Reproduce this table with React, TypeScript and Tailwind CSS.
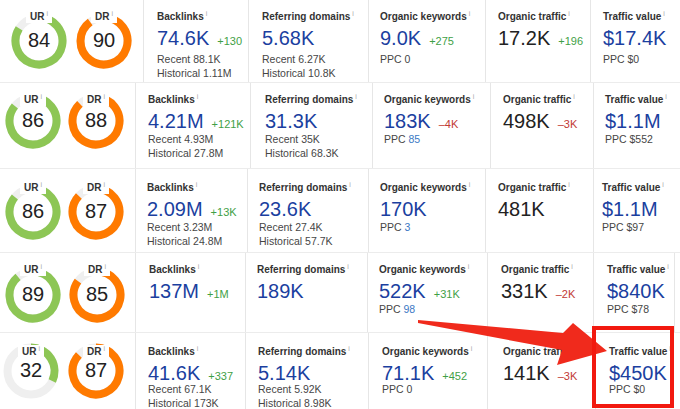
import React from "react";

type Col = {
  w: string;
  pl: string;
  label: string;
  value: string;
  vc: "blue" | "black";
  delta?: string;
  dc?: "green" | "red";
  lines?: React.ReactNode[];
};

type Row = {
  h: string;
  pt: string;
  gaugeBox: string;
  gaugeGap: string;
  gaugeMt: string;
  labelTop: string;
  subMt: string;
  ur: number;
  dr: number;
  cols: Col[];
};

const Info = () => (
  <span className="ml-[2px] inline-block align-top text-[7px] leading-[8px] font-normal text-[#a8a8a8]">i</span>
);

function arcPath(p: number) {
  const r = 23.5;
  const t = 2 * Math.PI * Math.min(p, 0.9999);
  const x = 28 + r * Math.sin(t);
  const y = 28 - r * Math.cos(t);
  const large = p > 0.5 ? 1 : 0;
  return `M 28 ${28 - r} A ${r} ${r} 0 ${large} 1 ${x.toFixed(2)} ${y.toFixed(2)}`;
}

function Gauge({ label, value, color, labelTop }: { label: string; value: number; color: string; labelTop: string }) {
  return (
    <div className="relative h-[56px] w-[56px] shrink-0">
      <svg width="56" height="56" viewBox="0 0 56 56" className="absolute left-0 top-0">
        <circle cx="28" cy="28" r="23.5" fill="none" stroke="#efefef" strokeWidth="8" />
        <path d={arcPath(value / 100)} fill="none" stroke={color} strokeWidth="8" />
      </svg>
      <div className={`absolute left-1/2 -translate-x-1/2 ${labelTop} z-10 bg-white px-[4px] text-[10px] font-bold leading-[13px] text-[#333] whitespace-nowrap`}>
        {label}
        <Info />
      </div>
      <div className="absolute inset-0 flex items-center justify-center pb-[2px] text-[20px] leading-none text-[#222]">
        {value}
      </div>
    </div>
  );
}

function Cell({ col, pt, subMt }: { col: Col; pt: string; subMt: string }) {
  return (
    <div className={`${col.w} ${col.pl} ${pt} shrink-0 border-l border-[#e6e6e6] h-full`}>
      <div className="text-[10px] font-bold leading-[13px] text-[#333] whitespace-nowrap">
        {col.label}
        <Info />
      </div>
      <div className="mt-[3px] flex items-baseline whitespace-nowrap">
        <span className={`text-[20px] leading-[24px] ${col.vc === "blue" ? "text-[#1b3f9f]" : "text-[#222]"}`}>{col.value}</span>
        {col.delta && (
          <span className={`ml-[8px] text-[11px] ${col.dc === "green" ? "text-[#3f9f46]" : "text-[#c23a33]"}`}>{col.delta}</span>
        )}
      </div>
      {col.lines && (
        <div className={`${subMt} text-[10.5px] leading-[13.5px] text-[#464646] whitespace-nowrap`}>
          {col.lines.map((l, i) => (
            <div key={i}>{l}</div>
          ))}
        </div>
      )}
    </div>
  );
}

const Blue = ({ children }: { children: React.ReactNode }) => <span className="text-[#3b78c4]">{children}</span>;

const rows: Row[] = [
  {
    h: "h-[82px]",
    pt: "pt-[10px]",
    gaugeBox: "w-[143px] pl-[11px]",
    gaugeGap: "gap-[9px]",
    gaugeMt: "pt-[13px]",
    labelTop: "top-[-3px]",
    subMt: "mt-[3px]",
    ur: 84,
    dr: 90,
    cols: [
      { w: "w-[105px]", pl: "pl-[13px]", label: "Backlinks", value: "74.6K", vc: "blue", delta: "+130", dc: "green", lines: ["Recent 88.1K", "Historical 1.11M"] },
      { w: "w-[120px]", pl: "pl-[13px]", label: "Referring domains", value: "5.68K", vc: "blue", lines: ["Recent 6.27K", "Historical 10.8K"] },
      { w: "w-[117px]", pl: "pl-[11px]", label: "Organic keywords", value: "9.0K", vc: "blue", delta: "+275", dc: "green", lines: ["PPC 0"] },
      { w: "w-[105px]", pl: "pl-[12px]", label: "Organic traffic", value: "17.2K", vc: "black", delta: "+196", dc: "green" },
      { w: "w-[90px]", pl: "pl-[12px]", label: "Traffic value", value: "$17.4K", vc: "blue", lines: ["PPC $0"] },
    ],
  },
  {
    h: "h-[86px]",
    pt: "pt-[10px]",
    gaugeBox: "w-[135px] pl-[5px]",
    gaugeGap: "gap-[7px]",
    gaugeMt: "pt-[10px]",
    labelTop: "top-[0px]",
    subMt: "mt-[0px]",
    ur: 86,
    dr: 88,
    cols: [
      { w: "w-[115px]", pl: "pl-[12px]", label: "Backlinks", value: "4.21M", vc: "blue", delta: "+121K", dc: "green", lines: ["Recent 4.93M", "Historical 27.8M"] },
      { w: "w-[122px]", pl: "pl-[14px]", label: "Referring domains", value: "31.3K", vc: "blue", lines: ["Recent 35K", "Historical 68.3K"] },
      { w: "w-[118px]", pl: "pl-[11px]", label: "Organic keywords", value: "183K", vc: "blue", delta: "–4K", dc: "red", lines: [<span key="a">PPC <Blue>85</Blue></span>] },
      { w: "w-[103px]", pl: "pl-[12px]", label: "Organic traffic", value: "498K", vc: "black", delta: "–3K", dc: "red" },
      { w: "w-[87px]", pl: "pl-[11px]", label: "Traffic value", value: "$1.1M", vc: "blue", lines: ["PPC $552"] },
    ],
  },
  {
    h: "h-[84px]",
    pt: "pt-[12px]",
    gaugeBox: "w-[135px] pl-[5px]",
    gaugeGap: "gap-[7px]",
    gaugeMt: "pt-[15px]",
    labelTop: "top-[-3px]",
    subMt: "mt-[0px]",
    ur: 86,
    dr: 87,
    cols: [
      { w: "w-[112px]", pl: "pl-[11px]", label: "Backlinks", value: "2.09M", vc: "blue", delta: "+13K", dc: "green", lines: ["Recent 3.23M", "Historical 24.8M"] },
      { w: "w-[121px]", pl: "pl-[11px]", label: "Referring domains", value: "23.6K", vc: "blue", lines: ["Recent 27.4K", "Historical 57.7K"] },
      { w: "w-[117px]", pl: "pl-[11px]", label: "Organic keywords", value: "170K", vc: "blue", lines: [<span key="a">PPC <Blue>3</Blue></span>] },
      { w: "w-[108px]", pl: "pl-[12px]", label: "Organic traffic", value: "481K", vc: "black" },
      { w: "w-[87px]", pl: "pl-[8px]", label: "Traffic value", value: "$1.1M", vc: "blue", lines: ["PPC $97"] },
    ],
  },
  {
    h: "h-[80px]",
    pt: "pt-[10px]",
    gaugeBox: "w-[135px] pl-[5px]",
    gaugeGap: "gap-[8px]",
    gaugeMt: "pt-[14px]",
    labelTop: "top-[-4px]",
    subMt: "mt-[0px]",
    ur: 89,
    dr: 85,
    cols: [
      { w: "w-[110px]", pl: "pl-[13px]", label: "Backlinks", value: "137M", vc: "blue", delta: "+1M", dc: "green" },
      { w: "w-[122px]", pl: "pl-[11px]", label: "Referring domains", value: "189K", vc: "blue" },
      { w: "w-[120px]", pl: "pl-[11px]", label: "Organic keywords", value: "522K", vc: "blue", delta: "+31K", dc: "green", lines: [<span key="a">PPC <Blue>98</Blue></span>] },
      { w: "w-[106px]", pl: "pl-[13px]", label: "Organic traffic", value: "331K", vc: "black", delta: "–2K", dc: "red" },
      { w: "w-[82px] border-r", pl: "pl-[13px]", label: "Traffic value", value: "$840K", vc: "blue", lines: ["PPC $78"] },
    ],
  },
  {
    h: "h-[77px]",
    pt: "pt-[12px]",
    gaugeBox: "w-[135px] pl-[3px]",
    gaugeGap: "gap-[9px]",
    gaugeMt: "pt-[10px]",
    labelTop: "top-[2px]",
    subMt: "mt-[-2px]",
    ur: 32,
    dr: 87,
    cols: [
      { w: "w-[110px]", pl: "pl-[12px]", label: "Backlinks", value: "41.6K", vc: "blue", delta: "+337", dc: "green", lines: ["Recent 67.1K", "Historical 173K"] },
      { w: "w-[123px]", pl: "pl-[12px]", label: "Referring domains", value: "5.14K", vc: "blue", lines: ["Recent 5.92K", "Historical 8.98K"] },
      { w: "w-[119px]", pl: "pl-[13px]", label: "Organic keywords", value: "71.1K", vc: "blue", delta: "+452", dc: "green", lines: ["PPC 0"] },
      { w: "w-[108px]", pl: "pl-[15px]", label: "Organic traffic", value: "141K", vc: "black", delta: "–3K", dc: "red" },
      { w: "w-[85px]", pl: "pl-[13px]", label: "Traffic value", value: "$450K", vc: "blue", lines: ["PPC $0"] },
    ],
  },
];

export default function App() {
  return (
    <div className="relative h-[409px] w-[680px] overflow-hidden bg-white font-['Liberation_Sans',Arial,sans-serif]">
      {rows.map((r, i) => (
        <div key={i} className={`flex ${r.h} overflow-hidden ${i > 0 ? "border-t border-[#ececec]" : ""}`}>
          <div className={`${r.gaugeBox} ${r.gaugeMt} flex ${r.gaugeGap} shrink-0 items-start`}>
            <Gauge label="UR" value={r.ur} color="#8dc655" labelTop={r.labelTop} />
            <Gauge label="DR" value={r.dr} color="#ff7a00" labelTop={r.labelTop} />
          </div>
          {r.cols.map((c, j) => (
            <Cell key={j} col={c} pt={r.pt} subMt={r.subMt} />
          ))}
        </div>
      ))}
      <svg className="absolute left-0 top-0 pointer-events-none" width="680" height="409" viewBox="0 0 680 409">
        <polygon points="418,320 563,333 573,323 607,351 557,365 562,350 418,323" fill="#f02a1c" />
      </svg>
      <div className="absolute left-[592px] top-[326px] h-[82px] w-[82px] border-[4px] border-[#f2190f]" />
    </div>
  );
}
